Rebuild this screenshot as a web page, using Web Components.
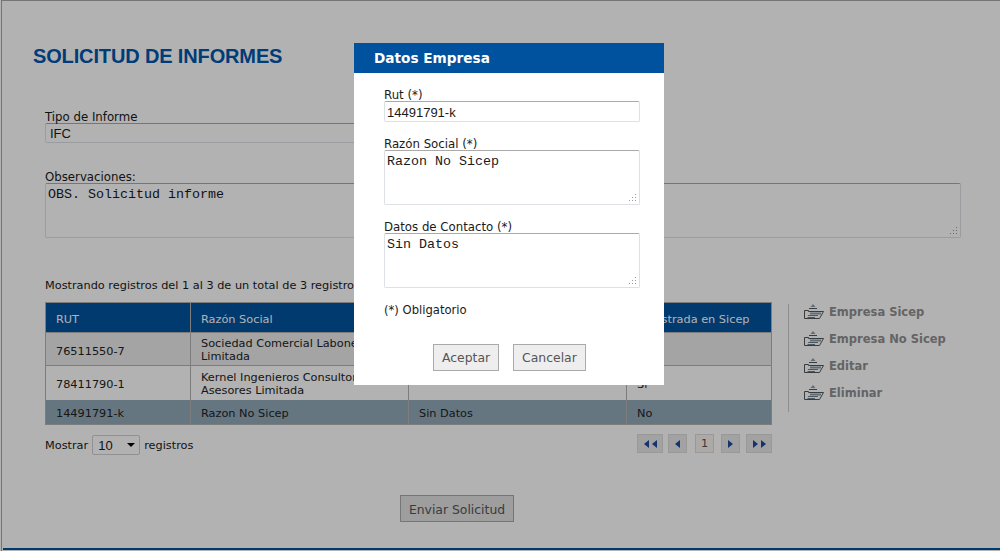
<!DOCTYPE html>
<html lang="es">
<head>
<meta charset="utf-8">
<title>Solicitud de informes</title>
<style>
    html, body {
        margin: 0;
        height: 100%;
        overflow: hidden;
        background: #fff;
    }
    body {
        font-family: "DejaVu Sans", Verdana, sans-serif;
        font-size: 11.3px;
        color: #1a1a1a;
    }
</style>
</head>
<body>
<informe-page>
    <page-title slot="title">SOLICITUD DE INFORMES</page-title>
    <form-field slot="fields" label="Tipo de Informe" value="IFC" kind="select" style="width:500px"></form-field>
    <form-field slot="fields" label="Observaciones:" value="OBS. Solicitud informe" kind="textarea" style="margin-top:27px"></form-field>
    <empresa-table slot="table"></empresa-table>
    <side-actions slot="side"></side-actions>
    <plain-button slot="send" label="Enviar Solicitud" dark></plain-button>
</informe-page>
<empresa-dialog></empresa-dialog>

<script>
const pageTemplate = document.createElement("template");
pageTemplate.innerHTML = `
<style>
    :host {
        display: block;
        box-sizing: border-box;
        width: 999px;
        height: 551px;
        margin-left: 1px;
        background: #fff;
        padding: 2px 0 0 1px;
        border-top: 1px solid #aaa;
        border-left: 1px solid #aaa;
    }
    #inner {
        height: 547px;
        box-sizing: border-box;
        border-bottom: 2px solid #00559f;
        padding: 41px 0 0 30px;
    }
    #fields {
        margin: 42px 0 0 12px;
        width: 916px;
    }
    #records {
        margin: 41px 0 0 12px;
        line-height: 14px;
    }
    #row {
        display: flex;
        align-items: flex-start;
        margin: 9px 0 0 12px;
    }
    #send {
        display: flex;
        justify-content: center;
        margin: 40px 0 0 0;
        width: 848px;
    }
</style>
<div id="inner">
    <slot name="title"></slot>
    <div id="fields"><slot name="fields"></slot></div>
    <div id="records">Mostrando registros del 1 al 3 de un total de 3 registros</div>
    <div id="row">
        <slot name="table"></slot>
        <slot name="side"></slot>
    </div>
    <div id="send"><slot name="send"></slot></div>
</div>
`;

class InformePage extends HTMLElement {
    constructor() {
        super();
        this.attachShadow({mode: "open"}).append(pageTemplate.content.cloneNode(true));
    }
}

class PageTitle extends HTMLElement {
    constructor() {
        super();
        this.attachShadow({mode: "open"}).innerHTML = `
<style>
    :host {
        display: block;
        font: bold 20px/24px "Liberation Sans", Arial, sans-serif;
        letter-spacing: -.14px;
        color: #0056ab;
    }
</style>
<slot></slot>`;
    }
}

const fieldTemplate = document.createElement("template");
fieldTemplate.innerHTML = `
<style>
    :host {
        display: block;
        font-size: 11.75px;
    }
    label {
        display: block;
        height: 13px;
        line-height: 14px;
    }
    #box {
        box-sizing: border-box;
        width: 100%;
        background: #fff;
        border: 1px solid #dde0e4;
        border-top-color: #aaa;
        border-radius: 2px;
    }
    :host([kind=select]) #box {
        height: 20px;
        padding: 0 4px;
        font: 13px/19px "Liberation Sans", Arial, sans-serif;
    }
    :host([kind=input]) #box {
        height: 21px;
        padding: 0 2px;
        font: 13px/22px "Liberation Sans", Arial, sans-serif;
    }
    :host([kind=textarea]) #box {
        position: relative;
        height: 55px;
        padding: 3px 2px;
        font: 13.33px/15px "Liberation Mono", "Courier New", monospace;
    }
    svg {
        position: absolute;
        right: 2px;
        bottom: 2px;
    }
</style>
<label id="label"></label>
<div id="box"></div>
`;

class FormField extends HTMLElement {
    constructor() {
        super();
        this.attachShadow({mode: "open"}).append(fieldTemplate.content.cloneNode(true));
    }
    connectedCallback() {
        const box = this.shadowRoot.querySelector("#box");
        this.shadowRoot.querySelector("#label").textContent = this.getAttribute("label");
        box.textContent = this.getAttribute("value");
        if (this.getAttribute("kind") === "textarea") {
            box.insertAdjacentHTML("beforeend", `<svg width="9" height="9" viewBox="0 0 9 9" fill="#999">
                <rect x="7" y="1" width="1" height="1"/><rect x="4" y="4" width="1" height="1"/><rect x="7" y="4" width="1" height="1"/>
                <rect x="1" y="7" width="1" height="1"/><rect x="4" y="7" width="1" height="1"/><rect x="7" y="7" width="1" height="1"/></svg>`);
        }
    }
}

const rows = [
    ["76511550-7", "Sociedad Comercial Labone Limitada", "", "Si", "#ebebeb", 33],
    ["78411790-1", "Kernel Ingenieros Consultores Asesores Limitada", "", "Si", "#fff", 34],
    ["14491791-k", "Razon No Sicep", "Sin Datos", "No", "#93a9b8", 25]
];

const tableTemplate = document.createElement("template");
tableTemplate.innerHTML = `
<style>
    :host {
        display: block;
        width: 727px;
    }
    table {
        width: 727px;
        table-layout: fixed;
        border-collapse: collapse;
        border: 1px solid #b4b4b4;
    }
    th, td {
        box-sizing: border-box;
        border-right: 1px solid #b4b4b4;
        padding: 2px 10px 0;
        text-align: left;
        font-weight: normal;
        line-height: 13px;
    }
    th, td:not(:nth-child(2)), tr.last td {
        padding-top: 4px;
    }
    th {
        height: 30px;
        background: #00539f;
        color: #fff;
    }
    td {
        border-top: 1px solid #b4b4b4;
        color: #222;
    }
    tr.last td {
        border-top: 0;
    }
    #foot {
        display: flex;
        justify-content: space-between;
        align-items: flex-start;
        margin-top: 9px;
    }
    #show {
        display: flex;
        align-items: center;
        gap: 4px;
        padding-top: 1px;
    }
    #select {
        box-sizing: border-box;
        display: flex;
        align-items: center;
        justify-content: space-between;
        width: 48px;
        height: 20px;
        padding: 0 4px 0 5px;
        background: #fff;
        border: 1px solid #d0d0d0;
        border-radius: 2px;
        font: 13px "Liberation Sans", Arial, sans-serif;
    }
    #caret {
        width: 0;
        height: 0;
        border: 4px solid transparent;
        border-top: 4px solid #000;
        border-bottom: 0;
    }
</style>
<table>
    <colgroup><col style="width:145px"><col style="width:218px"><col style="width:218px"><col></colgroup>
    <thead><tr><th>RUT</th><th>Razón Social</th><th></th><th>Registrada en Sicep</th></tr></thead>
    <tbody id="body"></tbody>
</table>
<div id="foot">
    <div id="show">Mostrar <span id="select">10 <span id="caret"></span></span> registros</div>
    <pager-bar></pager-bar>
</div>
`;

class EmpresaTable extends HTMLElement {
    constructor() {
        super();
        this.attachShadow({mode: "open"}).append(tableTemplate.content.cloneNode(true));
    }
    connectedCallback() {
        const body = this.shadowRoot.querySelector("#body");
        rows.forEach((r, i) => {
            const tr = document.createElement("tr");
            if (i === rows.length - 1) tr.className = "last";
            tr.style.background = r[4];
            tr.style.height = r[5] + "px";
            for (let c = 0; c < 4; c++) {
                const td = document.createElement("td");
                td.textContent = r[c];
                tr.append(td);
            }
            body.append(tr);
        });
    }
}

class PagerBar extends HTMLElement {
    constructor() {
        super();
        const arrow = (dir) => `<svg width="5" height="8" viewBox="0 0 5 8" fill="#1e4aa0"><path d="${dir < 0 ? "M5 0V8L0 4Z" : "M0 0V8L5 4Z"}"/></svg>`;
        this.attachShadow({mode: "open"}).innerHTML = `
<style>
    :host { display: flex; }
    span {
        box-sizing: border-box;
        display: flex;
        align-items: center;
        justify-content: center;
        gap: 3px;
        height: 19px;
        background: #e8e8e8;
        border: 1px solid #dcdcdc;
        color: #555;
    }
</style>
<span style="width:26px">${arrow(-1)}${arrow(-1)}</span>
<span style="width:19px;margin-left:5px">${arrow(-1)}</span>
<span style="width:19px;margin-left:8px;background:#f6f3f0">1</span>
<span style="width:19px;margin-left:7px">${arrow(1)}</span>
<span style="width:26px;margin-left:6px">${arrow(1)}${arrow(1)}</span>`;
    }
}

class SideActions extends HTMLElement {
    constructor() {
        super();
        const items = ["Empresa Sicep", "Empresa No Sicep", "Editar", "Eliminar"];
        const icon = `<svg width="20" height="17" viewBox="0 0 20 17" fill="none" stroke="#555">
            <path d="M9 1 6.500 4H11.500Z" fill="#86a0b2" stroke="none"/>
            <path d="M5 5.500H13"/>
            <path d="M.5 15.500V7.500H4.500V8.500H19.500L15.500 15.500H.5"/>
            <path d="M6 10.500H17" stroke="#86a0b2" stroke-width="2"/>
            <path d="M4 12.500H14M3.500 14.500H11" stroke="#6f7f8a"/></svg>`;
        this.attachShadow({mode: "open"}).innerHTML = `
<style>
    :host {
        display: flex;
        flex-direction: column;
        gap: 10px;
        box-sizing: border-box;
        height: 108px;
        margin: 2px 0 0 16px;
        padding: 0 0 0 15px;
        border-left: 1px solid #ccc;
    }
    div {
        display: flex;
        align-items: center;
        gap: 5px;
        height: 17px;
        font-weight: bold;
        font-size: 11.5px;
        color: #909090;
    }
    div:first-of-type { margin-top: -1px; }
</style>
${items.map(t => `<div>${icon}<span>${t}</span></div>`).join("")}`;
    }
}

class PlainButton extends HTMLElement {
    constructor() {
        super();
        this.attachShadow({mode: "open"}).innerHTML = `
<style>
    :host {
        display: inline-block;
        box-sizing: border-box;
        height: 27px;
        padding: 0 8px;
        border: 1px solid #aaa;
        background: #eee;
        color: #555;
        font-size: 12.4px;
        line-height: 25px;
    }
    :host([dark]) { background: #e2e2e2; line-height: 27px; }
</style>
<span id="t"></span>`;
    }
    connectedCallback() {
        this.shadowRoot.querySelector("#t").textContent = this.getAttribute("label");
    }
}

const dialogTemplate = document.createElement("template");
dialogTemplate.innerHTML = `
<style>
    :host {
        position: fixed;
        inset: 0;
        display: block;
        background: rgba(0, 0, 0, .3);
    }
    #dialog {
        position: absolute;
        left: 354px;
        top: 43px;
        width: 310px;
        height: 342px;
        background: #fff;
    }
    h2 {
        margin: 0;
        height: 30px;
        padding-left: 20px;
        background: #00529f;
        color: #fff;
        font: bold 13.65px/30px "DejaVu Sans", Verdana, sans-serif;
    }
    #body {
        padding: 15px 24px 0 30px;
    }
    form-field { margin-bottom: 15px; }
    #req { font-size: 11.6px; margin-top: 14px; }
    #buttons {
        display: flex;
        gap: 14px;
        margin: 27px 0 0 49px;
    }
</style>
<div id="dialog">
    <h2>Datos Empresa</h2>
    <div id="body">
        <form-field label="Rut (*)" value="14491791-k" kind="input"></form-field>
        <form-field label="Razón Social (*)" value="Razon No Sicep" kind="textarea"></form-field>
        <form-field label="Datos de Contacto (*)" value="Sin Datos" kind="textarea"></form-field>
        <div id="req">(*) Obligatorio</div>
        <div id="buttons">
            <plain-button label="Aceptar"></plain-button>
            <plain-button label="Cancelar"></plain-button>
        </div>
    </div>
</div>
`;

class EmpresaDialog extends HTMLElement {
    constructor() {
        super();
        this.attachShadow({mode: "open"}).append(dialogTemplate.content.cloneNode(true));
    }
}

customElements.define("informe-page", InformePage);
customElements.define("page-title", PageTitle);
customElements.define("form-field", FormField);
customElements.define("empresa-table", EmpresaTable);
customElements.define("pager-bar", PagerBar);
customElements.define("side-actions", SideActions);
customElements.define("plain-button", PlainButton);
customElements.define("empresa-dialog", EmpresaDialog);
</script>
</body>
</html>
